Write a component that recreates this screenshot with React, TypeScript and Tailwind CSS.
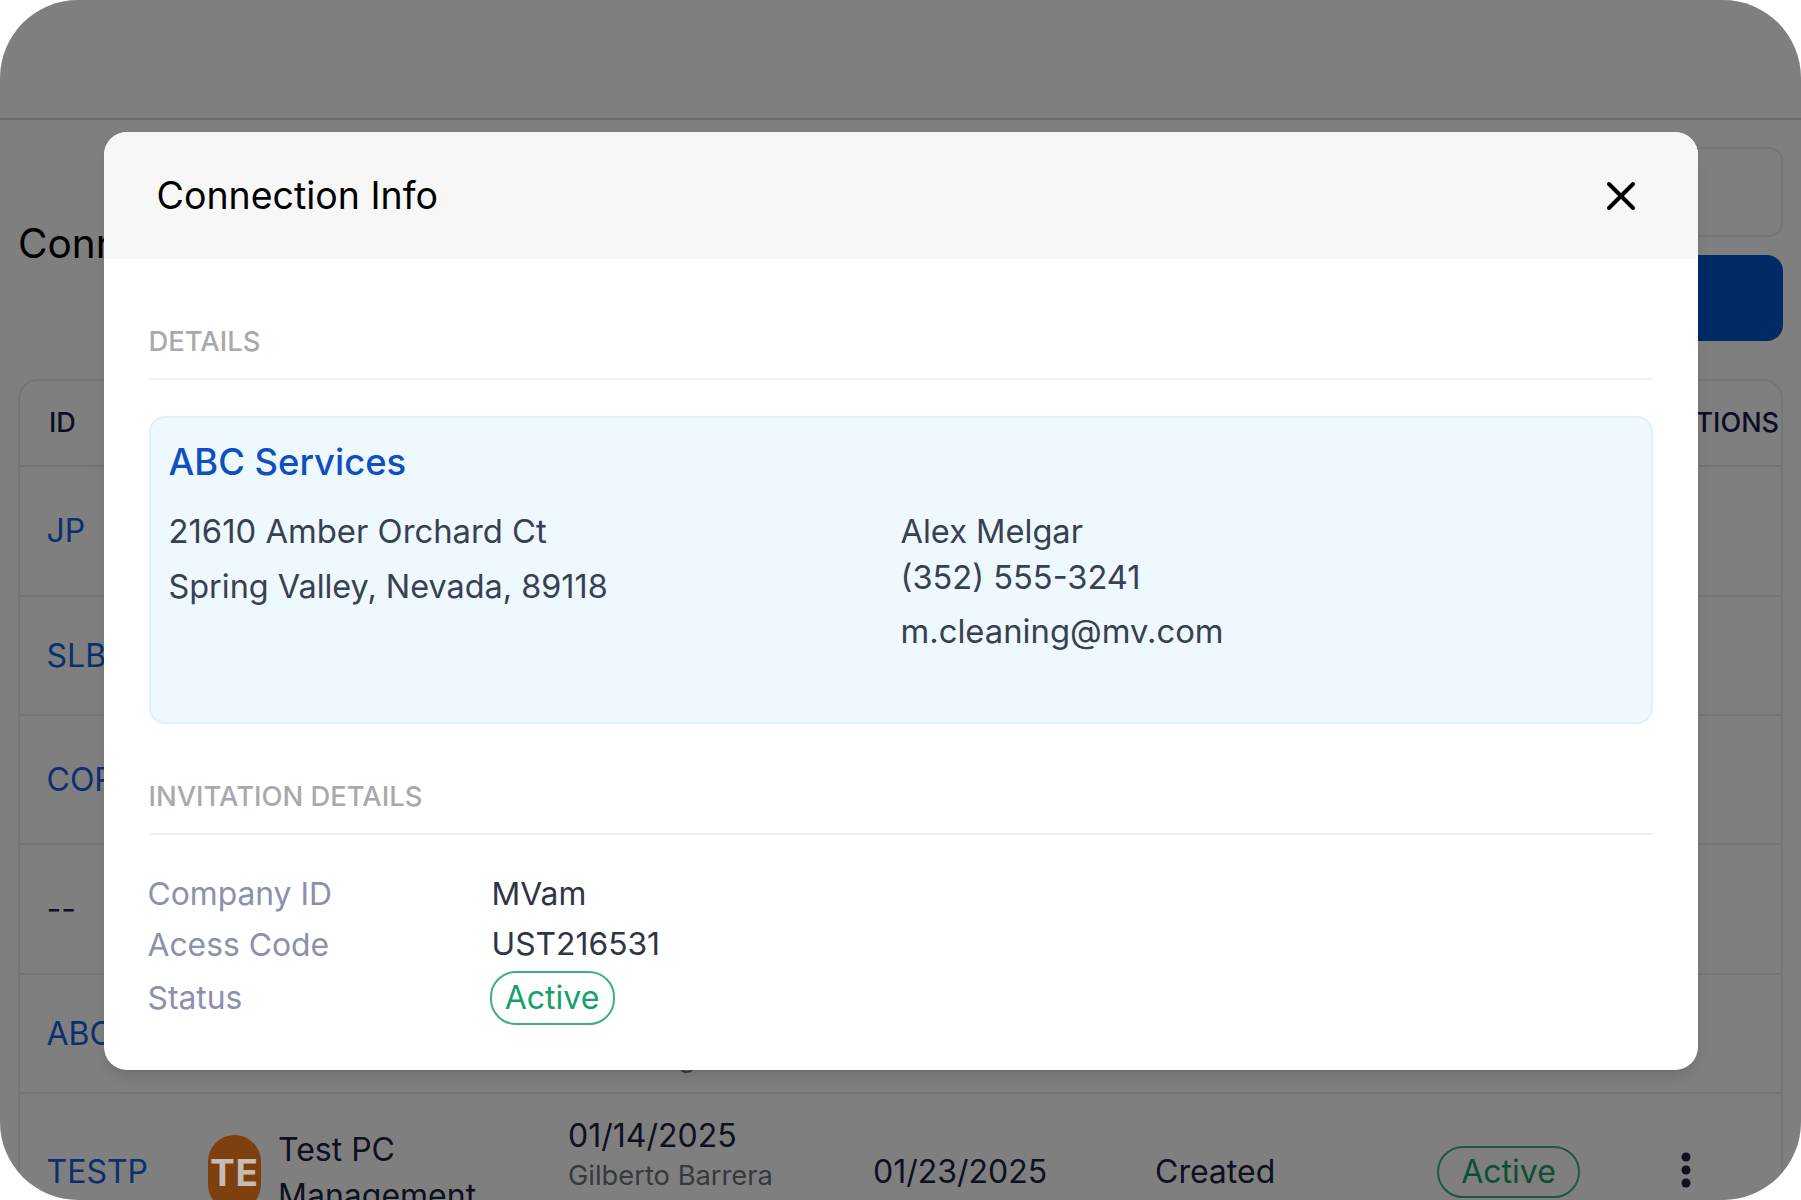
const rows = [
  { id: "JP", h: "h-[130px]" },
  { id: "SLB", h: "h-[119px]" },
  { id: "COR", h: "h-[129px]" },
  { id: "--", h: "h-[130px]", plain: true },
  { id: "ABC", h: "h-[119px]", contact: "Alex Melgar" },
];

function Pill({ className }: { className: string }) {
  return (
    <span className={`flex items-center justify-center rounded-[26px] border-2 border-[#3eae85] text-[#16a06a] ${className}`}>
      Active
    </span>
  );
}

function Background() {
  return (
    <div className="px-[18px] text-[#1a2340]">
      {/* Top bar */}
      <div className="-mx-[18px] h-[120px] border-b-2 border-[#d8d8d8]" />

      {/* Title + search + button */}
      <div className="flex h-[259px] justify-between">
        <h1 className="mt-[98px] text-[40.5px] leading-[52px] text-black">Connections</h1>
        <div className="mt-[27px] flex w-[300px] flex-col gap-[18px]">
          <div className="h-[90px] rounded-[14px] border-2 border-[#eaecef]" />
          <div className="h-[86px] rounded-[16px] bg-[#0056cc]" />
        </div>
      </div>

      {/* Table */}
      <div className="rounded-t-[20px] border-x-2 border-t-2 border-[#e8eaee]">
        <div className="flex h-[86px] items-center justify-between border-b-2 border-[#e2e4e8] pl-[29px] pr-[2px] text-[27px] font-medium text-[#1a1a4d]">
          <span>ID</span>
          <span>ACTIONS</span>
        </div>
        {rows.map((r) => (
          <div key={r.id} className={`flex items-center border-b-2 border-[#e8eaee] pl-[26.5px] text-[32px] ${r.h}`}>
            <span className={r.plain ? "" : "text-[#1560e0]"}>{r.id}</span>
            {r.contact && <span className="ml-[455px] mt-[50px] text-[27.3px] text-[#6b7280]">{r.contact}</span>}
          </div>
        ))}
        <div className="flex h-[104px] pl-[26.5px] text-[32px]">
          <span className="mt-[54px] w-[161.5px] text-[#1560e0]">TESTP</span>
          <div className="mt-[41px] flex h-[76px] w-[53px] shrink-0 items-center justify-center rounded-full bg-[#ff8020] text-[37px] font-bold tracking-[1px]">
            <span className="relative z-10 text-[#c5bcb5]">TE</span>
          </div>
          <div className="ml-[17px] mt-[33px] w-[290px] leading-[46px]">
            Test PC
            <br />
            Management
          </div>
          <div className="mt-[20px] w-[305px]">
            <div className="leading-[44px]">01/14/2025</div>
            <div className="text-[27.3px] leading-[36px] text-[#6b7280]">Gilberto Barrera</div>
          </div>
          <span className="mt-[54px] w-[282px]">01/23/2025</span>
          <span className="mt-[54px] w-[282px]">Created</span>
          <Pill className="mt-[52px] h-[52px] w-[143px]" />
          <svg className="ml-[100px] mt-[58px]" width="12" height="36" viewBox="0 0 12 36" fill="#1a2340">
            <circle cx="6" cy="5" r="4.5" />
            <circle cx="6" cy="18" r="4.5" />
            <circle cx="6" cy="31" r="4.5" />
          </svg>
        </div>
      </div>
    </div>
  );
}

function SectionHead({ label }: { label: string }) {
  return (
    <div className="border-b-2 border-[#f0f0f2] pb-[20px] text-[27.4px] font-medium leading-[33px] text-[#a9a9ad]">
      {label}
    </div>
  );
}

function ConnectionInfo() {
  return (
    <div className="h-fit w-[1594px] overflow-hidden rounded-[23px] bg-white shadow-lg">
      {/* Header */}
      <div className="flex h-[127px] items-center justify-between bg-[#f7f7f7] pl-[53px] pr-[61px]">
        <span className="mt-[2px] text-[37.5px] text-black">Connection Info</span>
        <svg width="32" height="32" viewBox="0 0 32 32" fill="none" stroke="black" strokeWidth="4" strokeLinecap="round">
          <path d="M4 4l24 24M28 4L4 28" />
        </svg>
      </div>

      <div className="px-[45px] pb-[45px] pt-[66px]">
        <SectionHead label="DETAILS" />

        {/* Company box */}
        <div className="mt-[36px] h-[308px] rounded-[16px] border-2 border-[#e0f0fb] bg-[#edf8ff] px-[18px] pt-[22px]">
          <div className="text-[36.4px] font-[450] leading-[44px] text-[#0f4fc0]">ABC Services</div>
          <div className="mt-[24px] flex text-[32.6px] text-[#374151]">
            <div className="-mt-[4px] w-[732px] leading-[55px]">
              <div className="text-[32.8px]">21610 Amber Orchard Ct</div>
              <div className="text-[32.4px]">Spring Valley, Nevada, 89118</div>
            </div>
            <div>
              <div className="leading-[46px]">Alex Melgar</div>
              <div className="leading-[46px]">(352) 555-3241</div>
              <div className="mt-[8px] text-[32.8px] leading-[46px]">m.cleaning@mv.com</div>
            </div>
          </div>
        </div>

        <div className="mt-[56px]">
          <SectionHead label="INVITATION DETAILS" />
        </div>

        {/* Invitation rows */}
        <div className="-ml-[1px] mt-[37px] grid grid-cols-[344px_1fr] text-[31.8px] leading-[44px]">
          <span className="text-[#8a90ad]">Company ID</span>
          <span className="text-[#2f3447]">MVam</span>
          <span className="mt-[7px] text-[#8a90ad]">Acess Code</span>
          <span className="mt-[6px] text-[#2f3447]">UST216531</span>
          <span className="mt-[4px] self-center text-[#8a90ad]">Status</span>
          <Pill className="-ml-[2px] mt-[4px] h-[54px] w-[125px] text-[32px]" />
        </div>
      </div>
    </div>
  );
}

export default function App() {
  return (
    <div className="h-[1200px] w-[1801px] bg-white font-['Inter',sans-serif]">
      <div className="relative h-full overflow-hidden rounded-[78px] bg-white">
        <Background />
        <div className="absolute inset-0 flex justify-center bg-black/50 pt-[132px]">
          <ConnectionInfo />
        </div>
      </div>
    </div>
  );
}
